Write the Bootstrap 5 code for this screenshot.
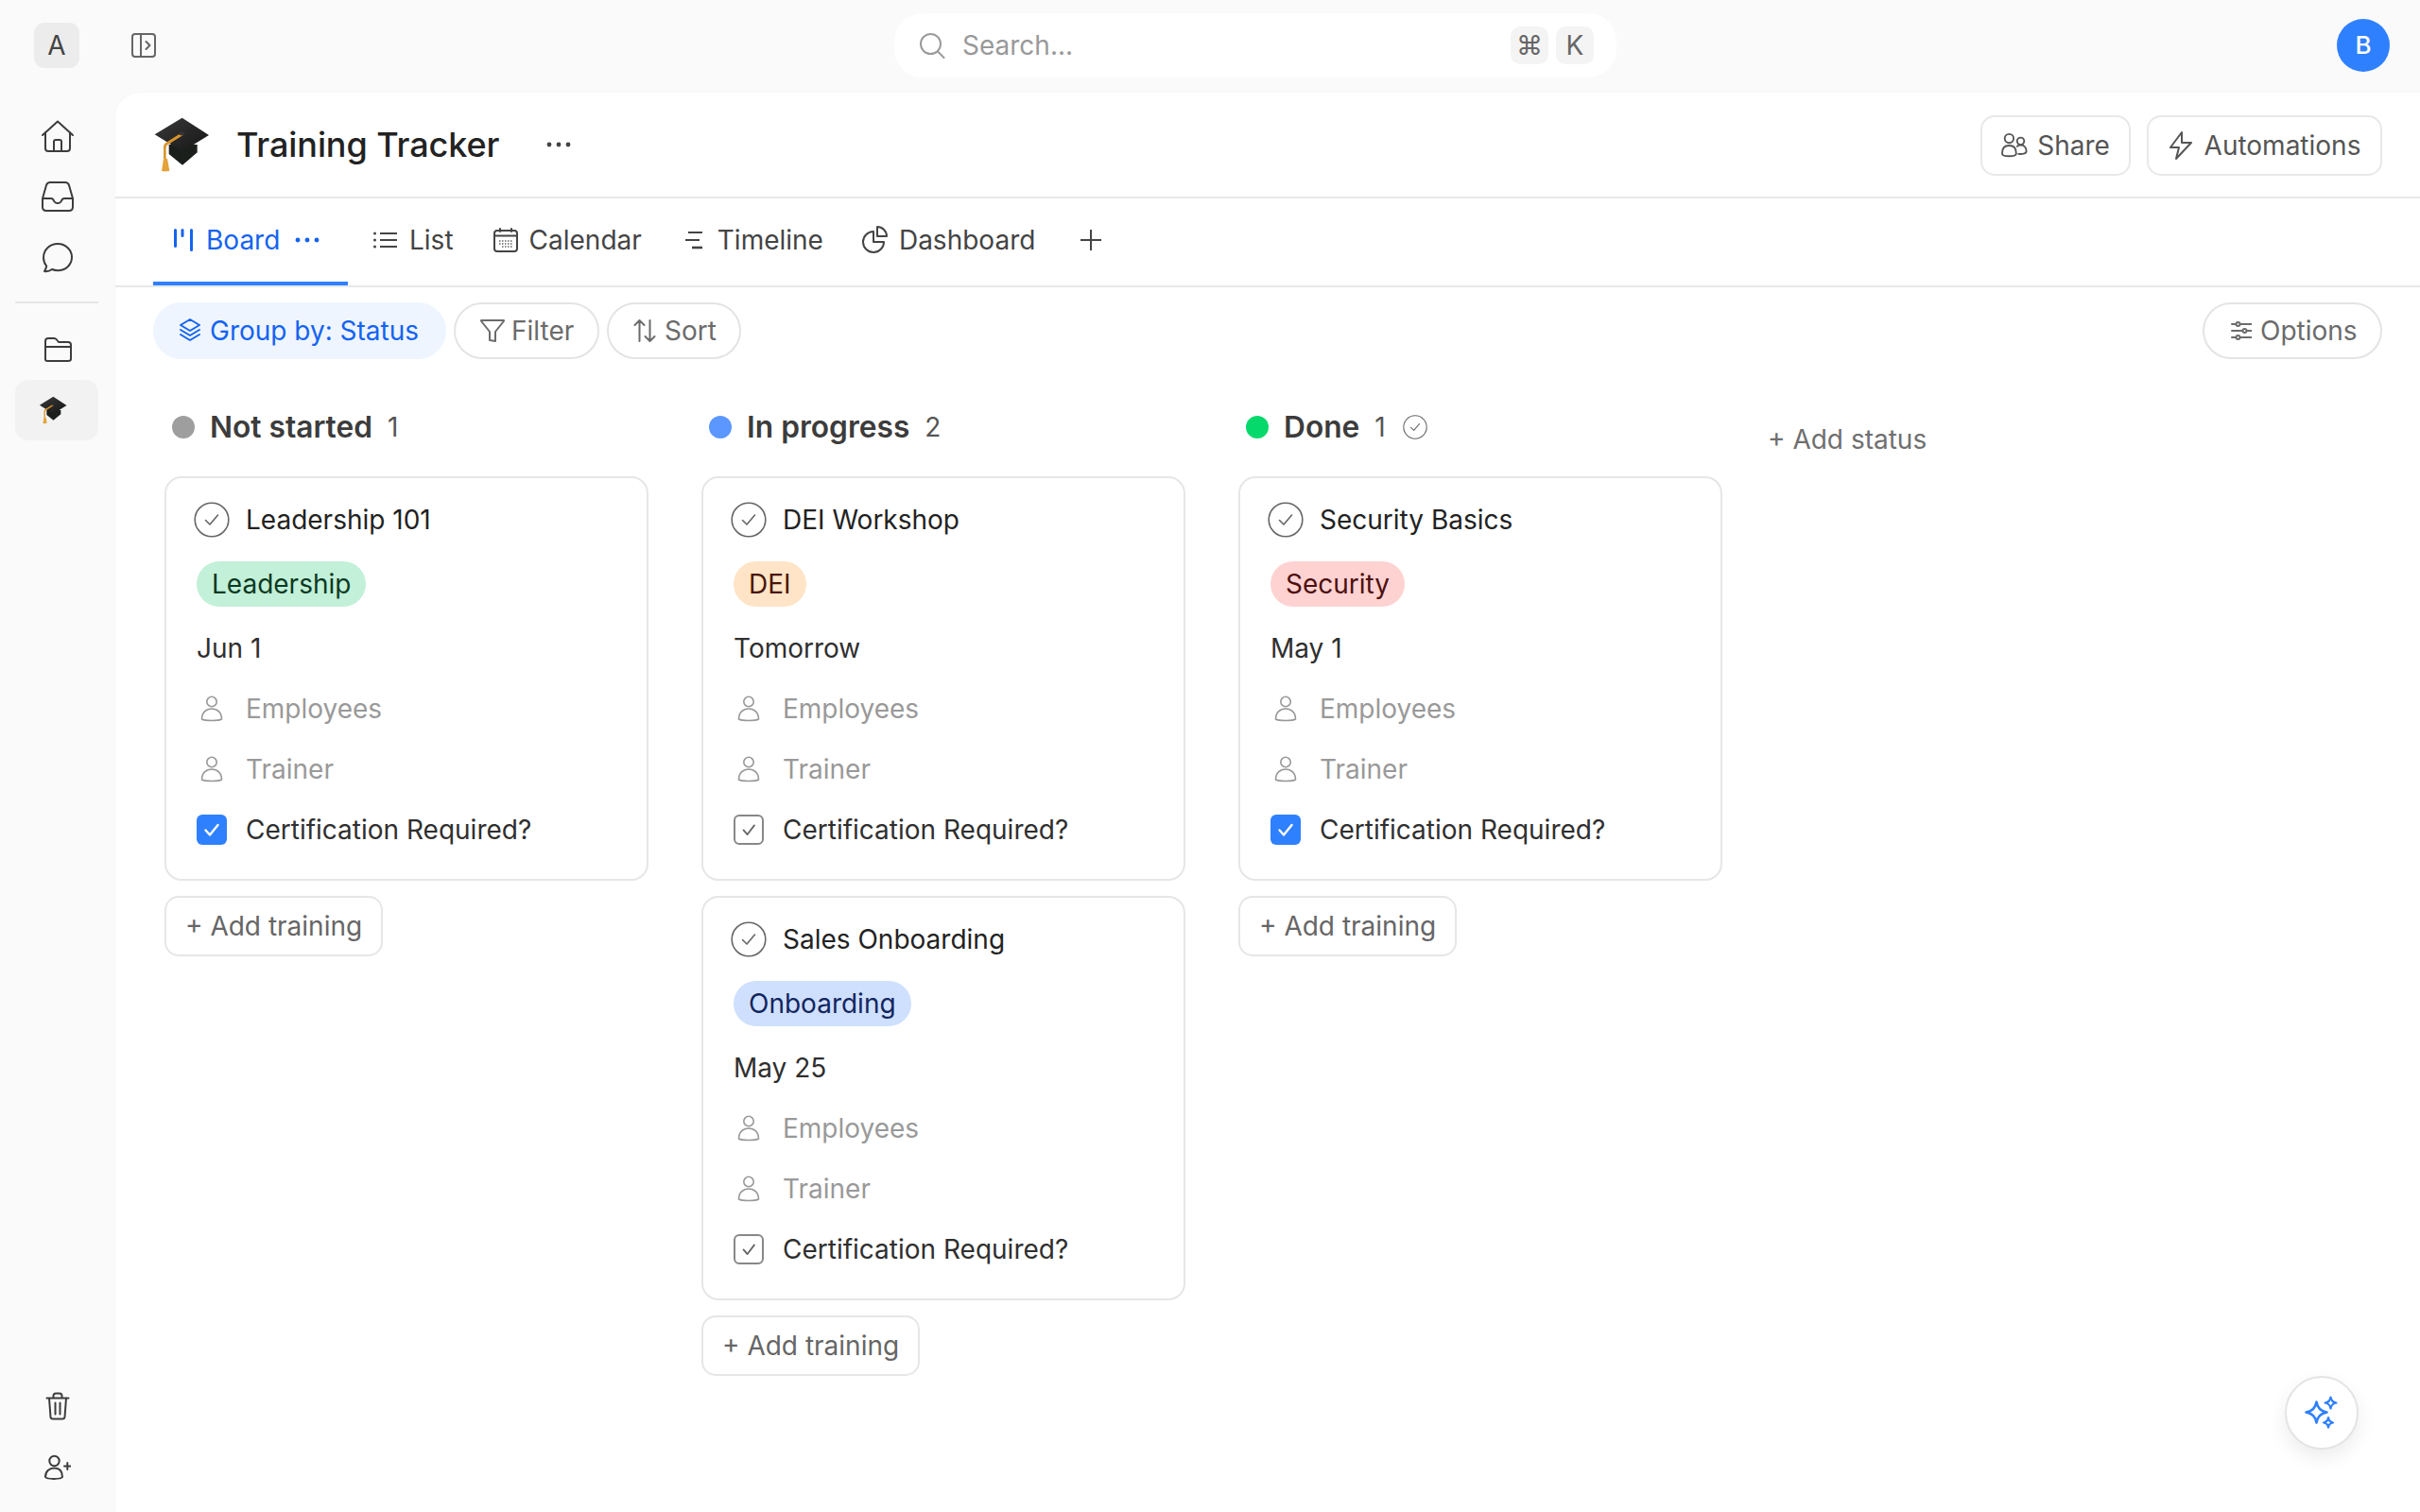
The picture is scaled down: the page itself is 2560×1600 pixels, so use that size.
<!DOCTYPE html>
<html lang="en">
<head>
<meta charset="utf-8">
<title>Training Tracker</title>
<link href="https://cdn.jsdelivr.net/npm/bootstrap@5.3.0/dist/css/bootstrap.min.css" rel="stylesheet">
<style>
html,body{height:100%}
body{font-family:Inter,"Liberation Sans",sans-serif;background:#fafafa;color:#2a2a2a;font-size:28px;line-height:34px;overflow:hidden}
svg{display:block;flex:none}
.ic{fill:none;stroke:currentColor;stroke-width:2;stroke-linecap:round;stroke-linejoin:round}
.defs-holder{position:absolute}
.topstrip{height:98px;padding-bottom:2px}
.brandbox{width:48px;height:48px;margin-left:36px;background:#ececec;border-radius:11px;font-size:28px;color:#444}
.panelbtn{margin-left:55px;color:#666}
.searchwrap{margin-left:781px;width:764px;height:68px;background:#fff;border-radius:30px;padding:0 24px 0 26px;color:#9a9a9a}
.stext{margin-left:18px;color:#999}
.keycap{width:40px;height:40px;background:#f4f4f4;border-radius:10px;color:#666;font-size:28px;line-height:40px;text-align:center}
.avatarb{width:56px;height:56px;margin-right:32px;background:#2f80ff;color:#fff;border-radius:50%;font-size:26px;font-weight:500}
.mainrow{height:1502px}
.siderail{width:122px;padding:28px 0 33px;color:#3c3c3c}
.railicon{display:flex;justify-content:center;align-items:center}
.ri-home{height:36px}
.ri-inbox{height:32px;margin-top:30px}
.ri-chat{height:34px;margin-top:32px}
.railsep{height:2px;width:88px;margin:29px 0 0 16px;background:#e6e6e6}
.ri-folder{height:26px;margin-top:36px}
.railbtn{height:64px;width:88px;margin:19px 0 0 16px;padding-left:25px;background:#f2f2f2;border-radius:14px}
.railtail{margin-top:36px}
.mainpane{background:#fff;border-top-left-radius:26px;box-shadow:0 0 2px rgba(0,0,0,.05);position:relative}
.headband{height:112px;padding:0 40px;border-bottom:2px solid #e8e8e8}
.doctitle{font-size:36px;line-height:44px;font-weight:500;color:#222;margin-left:28px;letter-spacing:-.1px}
.dots3{color:#444;margin-left:50px}
.hbtns{gap:17px;margin-top:2px}
.hbtn{height:64px;border:2px solid #e8e8e8;border-radius:15px;padding:0;font-size:28px;line-height:34px;color:#555;background:#fff}
.hb-share{width:159px;gap:10px}
.hb-auto{width:249px;gap:12px}
.tabband{height:94px;padding-left:40px;border-bottom:2px solid #e8e8e8;align-items:stretch}
.tabitem{padding:0 0 4px;color:#444;font-size:28px;gap:12px;display:flex;align-items:center;height:92px;text-decoration:none}
.tabitem:hover{color:#444}
.tabitem.on,.tabitem.on:hover{color:#1463f0;width:206px;padding:0 0 0 22px;gap:14px;border-bottom:4px solid #2f80ff;margin-bottom:-2px}
.dots-tab{margin-left:2px}
.t-list{margin-left:27px}
.t-cal{margin-left:42px}
.t-time{margin-left:46px;gap:14px}
.t-dash{margin-left:40px}
.t-plus{margin-left:47px}
.toolband{padding:16px 40px 0 40px}
.pillbtn{height:60px;border:2px solid #e4e4e4;border-radius:30px;font-size:28px;line-height:34px;color:#6b6b6b;background:#fff;gap:9px;padding:0 0 0 26px}
.pillbtn.on{background:#eef5ff;border-color:#eef5ff;color:#1463f0;gap:10px}
.pb-group{width:310px}
.pb-filter{width:154px;gap:7px}
.pb-sort{width:142px}
.pb-opts{width:190px;padding-left:28px}
.boardrow{padding:40px 0 0 52px;gap:56px}
.lanecol{width:512px;flex:none}
.lanehead{height:64px;margin-bottom:20px;padding-left:8px;font-size:31.7px;line-height:40px;font-weight:600;color:#3c3c3c}
.lanedot{width:24px;height:24px;border-radius:50%;margin-right:16px}
.d-gray{background:#9e9e9e}.d-blue{background:#5b97ff}.d-green{background:#06d96c}
.lanecount{font-size:28px;font-weight:400;color:#555;margin-left:16px}
.donecheck{margin-left:18px;color:#666}
.taskcard{border:2px solid #e6e6e6;border-radius:18px;padding:27px 0 35px 32px;margin-bottom:16px;background:#fff}
.taskrow{height:34px;display:flex;align-items:center;color:#2f2f2f;margin-top:30px}
.taskrow.first{margin-top:0;color:#222}
.taskrow.dateline{margin-top:27px}
.rowicon{width:32px;margin-right:20px;color:#999;flex:none;display:flex;justify-content:center}
.firsticon{margin-left:-3px;margin-right:17px;color:#666}
.muted{color:#999}
.tagwrap{height:75px;font-size:0}
.tagpill{display:inline-block;height:48px;line-height:48px;margin-top:27px;padding:0 16px;border-radius:24px;font-size:28px;font-weight:400;vertical-align:top}
.tag-green{background:#c3f0d8;color:#0b3a23}
.tag-orange{background:#ffe4c7;color:#4a1505}
.tag-red{background:#ffd2d2;color:#4d1010}
.tag-blue{background:#cfe0fe;color:#13265e}
.boxchk{width:32px;height:32px;border-radius:6px;background:#2f80ff;color:#fff;margin-right:20px;flex:none;display:flex;align-items:center;justify-content:center}
.boxchk.off{background:#fff;border:2px solid #888;color:#666}
.addtr{height:64px;border:2px solid #e6e6e6;border-radius:15px;padding:0 20px;font-size:28px;line-height:34px;color:#666;background:#fff}
.addstat{color:#6f6f6f;font-size:28px;margin:28px 0 0 -8px;padding:0}
.fabbtn{position:absolute;right:65px;bottom:66px;width:78px;height:78px;border-radius:50%;background:#fff;border:2px solid #e4e4e4;box-shadow:0 8px 20px rgba(0,0,0,.08);color:#2f80ff;padding:0}
</style>
</head>
<body>
<svg width="0" height="0" class="defs-holder">
<defs>
<linearGradient id="capg" x1="0" y1="0" x2="1" y2="1"><stop offset="0" stop-color="#3a3a3a"/><stop offset="1" stop-color="#151515"/></linearGradient>
<symbol id="cap" viewBox="65 70 180 180">
<path d="M115 160h90v25l-47 40-43-35z" fill="#1b1f1c"/>
<path d="M70 128 157 75l85 55-84 52z" fill="url(#capg)"/>
<path d="M156 122 104 155q-6 4-6 12v40h8v-36q0-7 5-10l49-31z" fill="#d9962e"/>
<path d="M98 205h12l7 38q-12 4-25 1z" fill="#e3a23a"/>
<ellipse cx="156" cy="125" rx="9" ry="6" fill="#333"/>
</symbol>
<symbol id="cc" viewBox="0 0 38 38"><circle cx="19" cy="19" r="17.8" fill="none" stroke="currentColor" stroke-width="1.6"/><path d="M12.5 19.5 17 24l8.5-10" fill="none" stroke="currentColor" stroke-width="1.6" stroke-linecap="round" stroke-linejoin="round"/></symbol>
<symbol id="pp" viewBox="0 0 24 28"><circle cx="12" cy="6.500" r="5.200" fill="none" stroke="currentColor" stroke-width="1.600"/><path d="M1.500 25c0-7 4.500-11 10.500-11s10.500 4 10.500 11c-3 2-18 2-21 0z" fill="none" stroke="currentColor" stroke-width="1.600" stroke-linejoin="round"/></symbol>
<symbol id="ok" viewBox="0 0 24 24"><path d="M5.500 12.500 10 17.500 18.500 7" fill="none" stroke="currentColor" stroke-width="2.400" stroke-linecap="round" stroke-linejoin="round"/></symbol>
<symbol id="ok2" viewBox="0 0 24 24"><path d="M6 12.500 10.500 17.500 18.500 7" fill="none" stroke="currentColor" stroke-width="2" stroke-linecap="round" stroke-linejoin="round"/></symbol>
<symbol id="dd" viewBox="0 0 26 6"><circle cx="3" cy="3" r="2.400" fill="currentColor"/><circle cx="13" cy="3" r="2.400" fill="currentColor"/><circle cx="23" cy="3" r="2.400" fill="currentColor"/></symbol>
</defs>
</svg>

<header class="topstrip d-flex align-items-center">
  <div class="brandbox d-flex align-items-center justify-content-center">A</div>
  <svg class="panelbtn ic" width="26" height="26" viewBox="0 0 26 26"><rect x="1" y="1" width="24" height="24" rx="3"/><path d="M10 1v24M15.500 9l4 4-4 4"/></svg>
  <div class="searchwrap d-flex align-items-center">
    <svg class="ic" width="28" height="28" viewBox="0 0 28 28"><circle cx="12.500" cy="12.500" r="10.500"/><path d="M20 20.500 26.500 27"/></svg>
    <span class="stext flex-grow-1">Search...</span>
    <span class="keycap me-2">⌘</span><span class="keycap">K</span>
  </div>
  <div class="flex-grow-1 d-flex justify-content-end"><div class="avatarb d-flex align-items-center justify-content-center">B</div></div>
</header>

<div class="mainrow d-flex">
  <aside class="siderail d-flex flex-column justify-content-between">
    <div class="d-flex flex-column">
      <div class="railicon ri-home"><svg class="ic" width="36" height="34" viewBox="0 0 36 34" stroke-width="2.200"><path d="M2 16 18 1.500 34 16M5 13v17q0 3 3 3h20q3 0 3-3V13M14 33V23q0-2 2-2h4q2 0 2 2v10"/></svg></div>
      <div class="railicon ri-inbox"><svg class="ic" width="36" height="32" viewBox="0 0 36 32"><path d="M2 18 6 4q1-3 4-3h16q3 0 4 3l4 14v9q0 4-4 4H6q-4 0-4-4zM2 18h9q2 0 3 2.500 1 2.500 4 2.500t4-2.500q1-2.500 3-2.500h9"/></svg></div>
      <div class="railicon ri-chat"><svg class="ic" width="34" height="34" viewBox="0 0 34 34"><path d="M17 2C8.500 2 2 8.500 2 16.500c0 3.500 1.200 6.500 3.200 9-.3 2-1.200 4-2.200 5.500 3 .5 6-.5 8-2 2 .8 3.800 1.200 6 1.200 8.500 0 15-6 15-14.200C32 8.500 25.500 2 17 2z"/></svg></div>
      <div class="railsep"></div>
      <div class="railicon ri-folder"><svg class="ic" width="30" height="26" viewBox="0 0 30 26"><path d="M2 23V4q0-3 3-3h6q2 0 3 1.500L16 5h10q3 0 3 3v15q0 2-3 2H4q-2 0-2-2zM2 10h27"/></svg></div>
      <div class="railbtn d-flex align-items-center"><svg width="30" height="30"><use href="#cap"/></svg></div>
    </div>
    <div class="d-flex flex-column align-items-center">
      <svg class="ic" width="26" height="30" viewBox="0 0 26 30"><path d="M1.500 6.500h23M4 6.500l1.500 20q.2 2 2.500 2h10q2.300 0 2.500-2l1.500-20M8.500 6V4q0-2.500 2.500-2.500h4q2.500 0 2.500 2.500v2M10.500 11.500v12M15.500 11.500v12"/></svg>
      <svg class="ic railtail" width="28" height="28" viewBox="0 0 28 28"><circle cx="10.500" cy="7" r="5.200"/><path d="M1 24c0-6 4-9.500 9.500-9.500S19 18 19 24c-2 2.500-16 2.500-18 0zM21 12.500h6.500M24.300 9v7"/></svg>
    </div>
  </aside>

  <main class="mainpane flex-grow-1">
    <div class="headband d-flex align-items-center">
      <svg width="60" height="60"><use href="#cap"/></svg>
      <h1 class="doctitle mb-0">Training Tracker</h1>
      <svg class="dots3" width="26" height="6"><use href="#dd"/></svg>
      <div class="ms-auto d-flex hbtns">
        <button class="btn hbtn hb-share d-flex align-items-center justify-content-center" type="button">
          <svg class="ic" width="28" height="30" viewBox="0 0 30 30" stroke-width="1.800"><circle cx="9" cy="7" r="5"/><circle cx="22" cy="10" r="4"/><path d="M1 24c0-6 3-9 8-9s8 3 8 9c0 4-16 4-16 0zM18 16c1-1 2.500-1.500 4-1.500 4 0 6.500 3 6.500 7 0 3-5 3.500-9 3"/></svg>
          <span>Share</span>
        </button>
        <button class="btn hbtn hb-auto d-flex align-items-center justify-content-center" type="button">
          <svg class="ic" width="26" height="30" viewBox="0 0 26 30"><path d="M14 1 2 17h9l-3 12L24 12h-10z"/></svg>
          <span>Automations</span>
        </button>
      </div>
    </div>

    <nav class="tabband nav">
      <a class="tabitem on" href="#">
        <svg width="20" height="24" viewBox="0 0 20 24"><path d="M1.500 1.500v17M9 1.500v6M18.500 1.500v21" stroke="#1463f0" stroke-width="3" fill="none" stroke-linecap="round"/></svg>
        <span>Board</span>
        <svg class="dots-tab" width="26" height="6"><use href="#dd"/></svg>
      </a>
      <a class="tabitem t-list" href="#">
        <svg width="26" height="18" viewBox="0 0 26 18"><path d="M7 2h18M7 9h18M7 16h18" stroke="currentColor" stroke-width="2" fill="none"/><circle cx="1.500" cy="2" r="1.500" fill="currentColor"/><circle cx="1.500" cy="9" r="1.500" fill="currentColor"/><circle cx="1.500" cy="16" r="1.500" fill="currentColor"/></svg>
        <span>List</span>
      </a>
      <a class="tabitem t-cal" href="#">
        <svg class="ic" width="26" height="26" viewBox="0 0 26 26"><rect x="1" y="3" width="24" height="22" rx="3"/><path d="M1 8.500h24M7 1v3M19 1v3"/><path d="M6 14h14M6 17h14M9 20h11" stroke="#888" stroke-dasharray="1.500 1.500" stroke-linecap="butt"/></svg>
        <span>Calendar</span>
      </a>
      <a class="tabitem t-time" href="#">
        <svg width="20" height="24" viewBox="0 0 20 24"><path d="M3 4h15M0 12h15" stroke="currentColor" stroke-width="2" fill="none"/><path d="M7 20h11" stroke="currentColor" stroke-width="2.600" fill="none"/></svg>
        <span>Timeline</span>
      </a>
      <a class="tabitem t-dash" href="#">
        <svg class="ic" width="28" height="30" viewBox="0 0 28 30"><path d="M13 6A11 11 0 1 0 24 17H13zM17 1a10 10 0 0 1 10 10H17z"/></svg>
        <span>Dashboard</span>
      </a>
      <a class="tabitem t-plus" href="#">
        <svg width="24" height="24" viewBox="0 0 24 24"><path d="M12 1v22M1 12h22" stroke="currentColor" stroke-width="2" fill="none"/></svg>
      </a>
    </nav>

    <div class="toolband d-flex gap-2">
      <button class="btn pillbtn on pb-group d-flex align-items-center" type="button">
        <svg class="ic" width="22" height="26" viewBox="0 0 22 26" stroke-width="1.800"><path d="M11 1 21 7l-10 6L1 7zM1 12l10 6 10-6M1 17l10 6 10-6"/></svg><span>Group by: Status</span>
      </button>
      <button class="btn pillbtn pb-filter d-flex align-items-center" type="button">
        <svg class="ic" width="26" height="26" viewBox="0 0 26 26"><path d="M1.500 2h23q1 0 .3 1L16 14v10l-6-1v-9L1.200 3q-.7-1 .3-1z"/></svg><span>Filter</span>
      </button>
      <button class="btn pillbtn pb-sort d-flex align-items-center" type="button">
        <svg class="ic" width="24" height="26" viewBox="0 0 24 26"><path d="M6.500 24V2M1.500 7l5-5 5 5M17.500 2v22M12.500 19l5 5 5-5"/></svg><span>Sort</span>
      </button>
      <button class="btn pillbtn pb-opts d-flex align-items-center ms-auto" type="button">
        <svg class="ic" width="22" height="22" viewBox="0 0 22 22" stroke-width="1.800"><path d="M1 4h21M1 11h21M1 18h21"/><circle cx="7.500" cy="4" r="2" fill="#fff"/><circle cx="14.500" cy="11" r="2" fill="#fff"/><circle cx="7.500" cy="18" r="2" fill="#fff"/></svg><span>Options</span>
      </button>
    </div>

    <div class="boardrow d-flex">
      <section class="lanecol">
        <div class="lanehead d-flex align-items-center"><span class="lanedot d-gray"></span><span>Not started</span><span class="lanecount">1</span></div>
        <div class="card taskcard">
          <div class="taskrow first"><svg class="firsticon" width="38" height="38"><use href="#cc"/></svg><span>Leadership 101</span></div>
          <div class="tagwrap"><span class="badge tagpill tag-green">Leadership</span></div>
          <div class="taskrow dateline">Jun 1</div>
          <div class="taskrow"><span class="rowicon"><svg width="24" height="28"><use href="#pp"/></svg></span><span class="muted">Employees</span></div>
          <div class="taskrow"><span class="rowicon"><svg width="24" height="28"><use href="#pp"/></svg></span><span class="muted">Trainer</span></div>
          <div class="taskrow"><span class="boxchk"><svg width="24" height="24"><use href="#ok"/></svg></span><span>Certification Required?</span></div>
        </div>
        <button class="btn addtr" type="button">+ Add training</button>
      </section>

      <section class="lanecol">
        <div class="lanehead d-flex align-items-center"><span class="lanedot d-blue"></span><span>In progress</span><span class="lanecount">2</span></div>
        <div class="card taskcard">
          <div class="taskrow first"><svg class="firsticon" width="38" height="38"><use href="#cc"/></svg><span>DEI Workshop</span></div>
          <div class="tagwrap"><span class="badge tagpill tag-orange">DEI</span></div>
          <div class="taskrow dateline">Tomorrow</div>
          <div class="taskrow"><span class="rowicon"><svg width="24" height="28"><use href="#pp"/></svg></span><span class="muted">Employees</span></div>
          <div class="taskrow"><span class="rowicon"><svg width="24" height="28"><use href="#pp"/></svg></span><span class="muted">Trainer</span></div>
          <div class="taskrow"><span class="boxchk off"><svg width="22" height="22"><use href="#ok2"/></svg></span><span>Certification Required?</span></div>
        </div>
        <div class="card taskcard">
          <div class="taskrow first"><svg class="firsticon" width="38" height="38"><use href="#cc"/></svg><span>Sales Onboarding</span></div>
          <div class="tagwrap"><span class="badge tagpill tag-blue">Onboarding</span></div>
          <div class="taskrow dateline">May 25</div>
          <div class="taskrow"><span class="rowicon"><svg width="24" height="28"><use href="#pp"/></svg></span><span class="muted">Employees</span></div>
          <div class="taskrow"><span class="rowicon"><svg width="24" height="28"><use href="#pp"/></svg></span><span class="muted">Trainer</span></div>
          <div class="taskrow"><span class="boxchk off"><svg width="22" height="22"><use href="#ok2"/></svg></span><span>Certification Required?</span></div>
        </div>
        <button class="btn addtr" type="button">+ Add training</button>
      </section>

      <section class="lanecol">
        <div class="lanehead d-flex align-items-center"><span class="lanedot d-green"></span><span>Done</span><span class="lanecount">1</span><svg class="donecheck" width="26" height="26"><use href="#cc"/></svg></div>
        <div class="card taskcard">
          <div class="taskrow first"><svg class="firsticon" width="38" height="38"><use href="#cc"/></svg><span>Security Basics</span></div>
          <div class="tagwrap"><span class="badge tagpill tag-red">Security</span></div>
          <div class="taskrow dateline">May 1</div>
          <div class="taskrow"><span class="rowicon"><svg width="24" height="28"><use href="#pp"/></svg></span><span class="muted">Employees</span></div>
          <div class="taskrow"><span class="rowicon"><svg width="24" height="28"><use href="#pp"/></svg></span><span class="muted">Trainer</span></div>
          <div class="taskrow"><span class="boxchk"><svg width="24" height="24"><use href="#ok"/></svg></span><span>Certification Required?</span></div>
        </div>
        <button class="btn addtr" type="button">+ Add training</button>
      </section>

      <div class="addstat">+ Add status</div>
    </div>

    <button class="btn fabbtn d-flex align-items-center justify-content-center" type="button">
      <svg width="36" height="36" viewBox="0 0 36 36" fill="none" stroke="currentColor" stroke-width="2.600" stroke-linejoin="round"><path d="M12.500 6.500q1.500 9.500 11 11-9.500 1.500-11 11-1.500-9.500-11-11 9.500-1.500 11-11z"/><path d="M27.500 1.500q.8 5.300 6 6-5.200.8-6 6-.8-5.200-6-6 5.200-.7 6-6zM25 23q.6 4.400 5 5.500-4.400.6-5 5-.6-4.400-5-5 4.400-1.100 5-5.500z" stroke-width="2.200"/></svg>
    </button>
  </main>
</div>
<script src="https://cdn.jsdelivr.net/npm/bootstrap@5.3.0/dist/js/bootstrap.bundle.min.js"></script>
</body>
</html>
